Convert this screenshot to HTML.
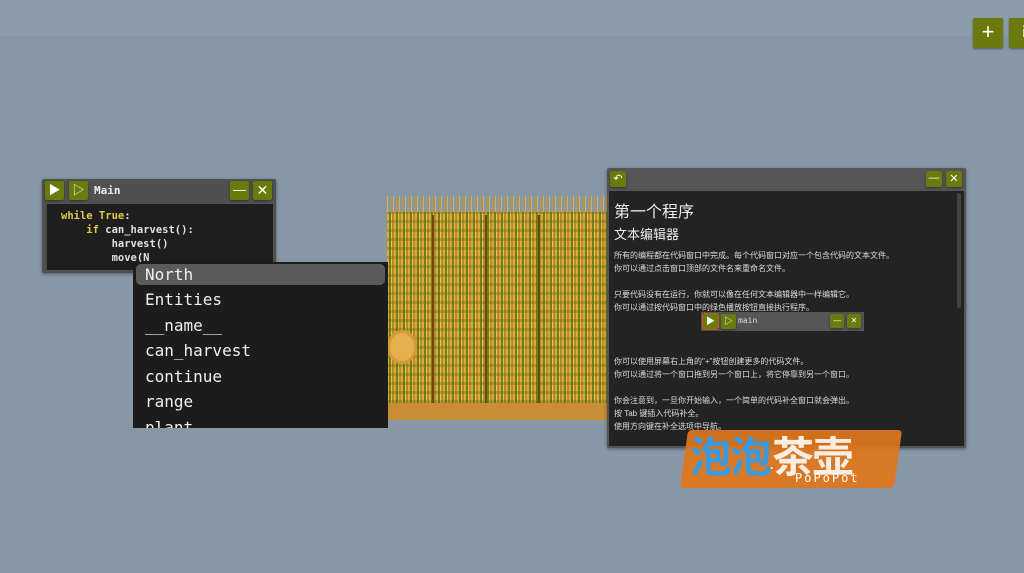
<!DOCTYPE html><html><head><meta charset="utf-8"><style>
*{margin:0;padding:0;box-sizing:border-box}
body{width:1024px;height:573px;overflow:hidden;background:#8797a6;position:relative;font-family:"Liberation Sans","Noto Sans CJK SC",sans-serif}
.a{position:absolute}
.btn{position:absolute;background:#6a7a0c;border-radius:2px;color:#fff;text-align:center;box-shadow:0 1px 2px rgba(0,0,0,.4)}
.mono{font-family:"DejaVu Sans Mono","Liberation Mono",monospace}
.doc p{position:absolute;left:5px;font-size:8px;color:#ddd;white-space:nowrap}
</style></head><body>
<div class="a" style="left:0;top:0;width:1024px;height:36px;background:#8c9cab"></div>
<div class="btn" style="left:973px;top:18px;width:30px;height:30px;font-size:22px;line-height:28px">+</div>
<div class="btn" style="left:1009px;top:18px;width:30px;height:30px;font-size:16px;line-height:30px">i</div>

<!-- main window -->
<div class="a" style="left:42px;top:179px;width:234px;height:94px;background:#505050;border-radius:2px;box-shadow:0 1px 3px rgba(0,0,0,.4)"></div>
<div class="btn" style="left:45px;top:181px;width:19px;height:19px;font-size:12px;line-height:19px">▶</div>
<div class="btn" style="left:69px;top:181px;width:19px;height:19px;font-size:12px;line-height:19px">▷</div>
<div class="a mono" style="left:94px;top:184px;color:#eee;font-size:11px;font-weight:bold">Main</div>
<div class="btn" style="left:230px;top:181px;width:19px;height:19px;font-size:13px;line-height:18px">—</div>
<div class="btn" style="left:253px;top:181px;width:19px;height:19px;font-size:14px;line-height:19px">✕</div>
<div class="a mono" style="left:46px;top:204px;width:227px;height:66px;background:#1e1e1e;font-size:10.5px;font-weight:bold;line-height:14px;color:#e0e0e0;padding:5px 0 0 14px;white-space:pre;border-left:1px solid #444"><span style="color:#e6c84a">while True</span>:
    <span style="color:#e6c84a">if</span> can_harvest():
        harvest()
        move(N</div>

<!-- wheat field -->
<div class="a" style="left:387px;top:196px;width:225px;height:20px;background:repeating-linear-gradient(90deg,#e0b040 0 1px,rgba(0,0,0,0) 1px 3px,#c99530 3px 4px,rgba(0,0,0,0) 4px 6px)"></div>
<div class="a" style="left:387px;top:212px;width:225px;height:191px;background:repeating-linear-gradient(90deg,#e0a838 0 2px,#6e7f1c 2px 4px,#f0c050 4px 5px,#b88a28 5px 7px);"></div>
<div class="a" style="left:387px;top:212px;width:225px;height:191px;background:repeating-linear-gradient(0deg,rgba(90,110,20,.35) 0 3px,rgba(0,0,0,0) 3px 9px);"></div>
<div class="a" style="left:432px;top:215px;width:2px;height:190px;background:#6a4a10"></div>
<div class="a" style="left:485px;top:215px;width:2px;height:190px;background:#6a4a10"></div>
<div class="a" style="left:538px;top:215px;width:2px;height:190px;background:#6a4a10"></div>
<div class="a" style="left:387px;top:403px;width:225px;height:17px;background:#c98d35"></div>
<div class="a" style="left:387px;top:330px;width:30px;height:34px;border-radius:50%;background:#e6b050;border:3px solid #d49a38"></div>

<!-- autocomplete -->
<div class="a mono" style="left:133px;top:262px;width:255px;height:166px;background:#1c1c1c;overflow:hidden;font-size:16px;color:#f0f0f0">
<div class="a" style="left:3px;top:2px;width:249px;height:21px;background:#5a5a5a;border-radius:5px"></div>
<div class="a" style="left:12px;top:2px;line-height:21px">North</div>
<div class="a" style="left:12px;top:27px;line-height:21px">Entities</div>
<div class="a" style="left:12px;top:53px;line-height:21px">__name__</div>
<div class="a" style="left:12px;top:78px;line-height:21px">can_harvest</div>
<div class="a" style="left:12px;top:104px;line-height:21px">continue</div>
<div class="a" style="left:12px;top:129px;line-height:21px">range</div>
<div class="a" style="left:12px;top:155px;line-height:21px">plant</div>
</div>

<!-- doc window -->
<div class="a" style="left:607px;top:168px;width:359px;height:280px;background:#555;border-radius:2px;box-shadow:0 1px 3px rgba(0,0,0,.4)"></div>
<div class="btn" style="left:610px;top:171px;width:16px;height:16px;font-size:11px;line-height:16px">↶</div>
<div class="btn" style="left:926px;top:171px;width:16px;height:16px;font-size:11px;line-height:15px">—</div>
<div class="btn" style="left:946px;top:171px;width:16px;height:16px;font-size:11px;line-height:16px">✕</div>
<div class="a doc" style="left:609px;top:191px;width:355px;height:255px;background:#232323">
<div class="a" style="right:3px;top:2px;width:4px;height:115px;background:#444;border-radius:2px"></div>
<p style="top:7px;font-size:16px;color:#eee">第一个程序</p>
<p style="top:33px;font-size:13px;color:#eee">文本编辑器</p>
<p style="top:59px">所有的编程都在代码窗口中完成。每个代码窗口对应一个包含代码的文本文件。</p>
<p style="top:72px">你可以通过点击窗口顶部的文件名来重命名文件。</p>
<p style="top:98px">只要代码没有在运行，你就可以像在任何文本编辑器中一样编辑它。</p>
<p style="top:111px">你可以通过按代码窗口中的绿色播放按钮直接执行程序。</p>
<div class="a" style="left:92px;top:121px;width:163px;height:19px;background:#555"></div>
<div class="btn" style="left:94px;top:123px;width:15px;height:15px;font-size:9px;line-height:15px;outline:1px solid #d05020">▶</div>
<div class="btn" style="left:112px;top:123px;width:15px;height:15px;font-size:9px;line-height:15px">▷</div>
<p class="mono" style="left:129px;top:125px;font-size:8px">main</p>
<div class="btn" style="left:221px;top:123px;width:14px;height:14px;font-size:8px;line-height:14px">—</div>
<div class="btn" style="left:238px;top:123px;width:14px;height:14px;font-size:8px;line-height:14px">✕</div>
<p style="top:165px">你可以使用屏幕右上角的"+"按钮创建更多的代码文件。</p>
<p style="top:178px">你可以通过将一个窗口拖到另一个窗口上，将它停靠到另一个窗口。</p>
<p style="top:204px">你会注意到，一旦你开始输入，一个简单的代码补全窗口就会弹出。</p>
<p style="top:217px">按 Tab 键插入代码补全。</p>
<p style="top:230px">使用方向键在补全选项中导航。</p>
</div>

<!-- watermark -->
<div class="a" style="left:684px;top:430px;width:214px;height:58px;background:#e0761c;border-radius:4px;transform:skewX(-8deg);opacity:.92"></div>
<div class="a" style="left:690px;top:424px;font-size:42px;font-weight:bold;color:#3a9be0;letter-spacing:-2px">泡泡<span style="color:#fff;font-size:12px">·</span><span style="color:#fbeee0">茶壶</span></div>
<div class="a mono" style="left:795px;top:471px;font-size:12px;color:#fff;letter-spacing:2px">PoPoPot</div>
</body></html>
